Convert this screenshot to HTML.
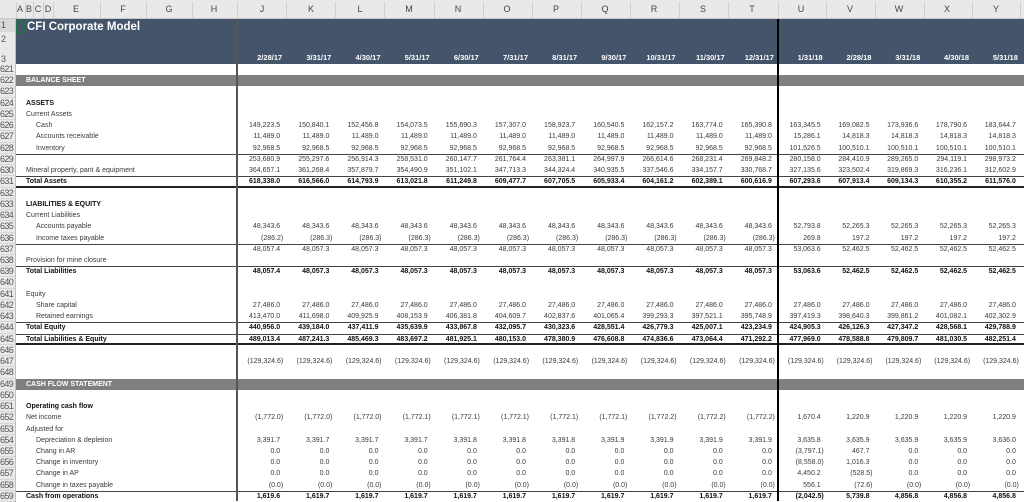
<!DOCTYPE html>
<html><head><meta charset="utf-8"><style>
*{margin:0;padding:0;box-sizing:border-box}
body{width:1024px;height:501px;overflow:hidden;background:#fff;font-family:"Liberation Sans",Arial,sans-serif;position:relative}
.hdr{position:absolute;left:0;top:0;width:1024px;height:19px;background:#e9e9e9;border-bottom:1px solid #c8c8c8}
.hdr span{position:absolute;top:4px;font-size:9px;color:#444;transform:translateX(-50%)}
.hdr i{position:absolute;top:2px;width:1px;height:16px;background:#d0d0d0}
.rn{position:absolute;left:0;width:16px;background:#e9e9e9;border-right:1px solid #c0c0c0;font-size:9px;color:#555;text-align:left;padding-left:1px}
.band{position:absolute;left:16px;top:19px;width:1008px;height:45px;background:#44546a}
.title{position:absolute;left:27px;top:21px;color:#fff;font-weight:bold;font-size:11.5px}
.dates{position:absolute;top:53px;left:237px;display:flex;color:#fff;font-weight:bold;font-size:7.5px}
.dates div{text-align:right;padding-right:4px}
#g{position:absolute;left:0;top:64px;width:1024px}
.r{display:flex;height:11.24px;line-height:11.24px;font-size:7px;color:#3a3a3a;white-space:nowrap;overflow:hidden}
.r .n{width:16px;flex:none;background:#e9e9e9;border-right:1px solid #c0c0c0;font-size:9px;letter-spacing:-0.6px;font-weight:normal;color:#555;padding-left:0;box-shadow:inset 0 -1px #d6d6d6;line-height:11.5px}
.r .w{display:flex;flex:1}
.r .l{width:221px;flex:none;padding-left:10px;overflow:hidden}
.r .l.i{padding-left:20px}
.r .c{width:49.18px;flex:none;text-align:right;padding-right:6px}
.r .c.u{width:48.8px}
.r .c.p{padding-right:3px}
.b{font-weight:bold;color:#111}
.t .w{box-shadow:inset 0 1px #444}
.d .w{box-shadow:inset 0 1px #444,inset 0 -2px #222}
.s .w{background:#7f7f7f;color:#fff;font-weight:bold}
.vl{position:absolute;top:19px;height:482px;width:2px}
.sel{position:absolute;left:16px;top:20px;width:9px;height:13px;border:1.5px solid #217346}
</style></head><body>
<div class="hdr">
<span style="left:20px">A</span><span style="left:29px">B</span><span style="left:38px">C</span><span style="left:48px">D</span><span style="left:76px">E</span><span style="left:123px">F</span><span style="left:169px">G</span><span style="left:214px">H</span>
<span style="left:262px">J</span><span style="left:311px">K</span><span style="left:360px">L</span><span style="left:409px">M</span><span style="left:458px">N</span><span style="left:507px">O</span><span style="left:556px">P</span><span style="left:605px">Q</span><span style="left:654px">R</span><span style="left:703px">S</span><span style="left:752px">T</span><span style="left:801px">U</span><span style="left:850px">V</span><span style="left:899px">W</span><span style="left:947px">X</span><span style="left:996px">Y</span>
<i style="left:16px"></i><i style="left:25px"></i><i style="left:33px"></i><i style="left:43px"></i><i style="left:53px"></i><i style="left:100px"></i><i style="left:146px"></i><i style="left:192px"></i><i style="left:237px"></i><i style="left:286px"></i><i style="left:335px"></i><i style="left:384px"></i><i style="left:434px"></i><i style="left:483px"></i><i style="left:532px"></i><i style="left:581px"></i><i style="left:630px"></i><i style="left:679px"></i><i style="left:728px"></i><i style="left:778px"></i><i style="left:826px"></i><i style="left:875px"></i><i style="left:924px"></i><i style="left:972px"></i><i style="left:1020px"></i>
</div>
<div class="rn" style="top:19px;height:13px;line-height:13px;background:#d8d8d8">1</div>
<div class="rn" style="top:32px;height:13px;line-height:15px">2</div>
<div class="rn" style="top:45px;height:19px;line-height:28px">3</div>
<div class="band"></div>
<div class="sel"></div>
<div class="title">CFI Corporate Model</div>
<div class="dates">
<div style="width:49.18px">2/28/17</div><div style="width:49.18px">3/31/17</div><div style="width:49.18px">4/30/17</div><div style="width:49.18px">5/31/17</div><div style="width:49.18px">6/30/17</div><div style="width:49.18px">7/31/17</div><div style="width:49.18px">8/31/17</div><div style="width:49.18px">9/30/17</div><div style="width:49.18px">10/31/17</div><div style="width:49.18px">11/30/17</div><div style="width:49.18px">12/31/17</div><div style="width:48.8px">1/31/18</div><div style="width:48.8px">2/28/18</div><div style="width:48.8px">3/31/18</div><div style="width:48.8px">4/30/18</div><div style="width:48.8px">5/31/18</div>
</div>
<div id="g">
<div class="r"><div class="n">621</div><div class="w"></div></div>
<div class="r s"><div class="n">622</div><div class="w"><div class="l">BALANCE SHEET</div></div></div>
<div class="r"><div class="n">623</div><div class="w"></div></div>
<div class="r b"><div class="n">624</div><div class="w"><div class="l">ASSETS</div></div></div>
<div class="r"><div class="n">625</div><div class="w"><div class="l">Current Assets</div></div></div>
<div class="r"><div class="n">626</div><div class="w"><div class="l i">Cash</div><div class="c">149,223.5</div><div class="c">150,840.1</div><div class="c">152,456.8</div><div class="c">154,073.5</div><div class="c">155,690.3</div><div class="c">157,307.0</div><div class="c">158,923.7</div><div class="c">160,540.5</div><div class="c">162,157.2</div><div class="c">163,774.0</div><div class="c">165,390.8</div><div class="c u">163,345.5</div><div class="c u">169,082.5</div><div class="c u">173,936.6</div><div class="c u">178,790.6</div><div class="c u">183,644.7</div></div></div>
<div class="r"><div class="n">627</div><div class="w"><div class="l i">Accounts receivable</div><div class="c">11,489.0</div><div class="c">11,489.0</div><div class="c">11,489.0</div><div class="c">11,489.0</div><div class="c">11,489.0</div><div class="c">11,489.0</div><div class="c">11,489.0</div><div class="c">11,489.0</div><div class="c">11,489.0</div><div class="c">11,489.0</div><div class="c">11,489.0</div><div class="c u">15,286.1</div><div class="c u">14,818.3</div><div class="c u">14,818.3</div><div class="c u">14,818.3</div><div class="c u">14,818.3</div></div></div>
<div class="r"><div class="n">628</div><div class="w"><div class="l i">Inventory</div><div class="c">92,968.5</div><div class="c">92,968.5</div><div class="c">92,968.5</div><div class="c">92,968.5</div><div class="c">92,968.5</div><div class="c">92,968.5</div><div class="c">92,968.5</div><div class="c">92,968.5</div><div class="c">92,968.5</div><div class="c">92,968.5</div><div class="c">92,968.5</div><div class="c u">101,526.5</div><div class="c u">100,510.1</div><div class="c u">100,510.1</div><div class="c u">100,510.1</div><div class="c u">100,510.1</div></div></div>
<div class="r t"><div class="n">629</div><div class="w"><div class="l"></div><div class="c">253,680.9</div><div class="c">255,297.6</div><div class="c">256,914.3</div><div class="c">258,531.0</div><div class="c">260,147.7</div><div class="c">261,764.4</div><div class="c">263,381.1</div><div class="c">264,997.9</div><div class="c">266,614.6</div><div class="c">268,231.4</div><div class="c">269,848.2</div><div class="c u">280,158.0</div><div class="c u">284,410.9</div><div class="c u">289,265.0</div><div class="c u">294,119.1</div><div class="c u">298,973.2</div></div></div>
<div class="r"><div class="n">630</div><div class="w"><div class="l">Mineral property, pant &amp; equipment</div><div class="c">364,657.1</div><div class="c">361,268.4</div><div class="c">357,879.7</div><div class="c">354,490.9</div><div class="c">351,102.1</div><div class="c">347,713.3</div><div class="c">344,324.4</div><div class="c">340,935.5</div><div class="c">337,546.6</div><div class="c">334,157.7</div><div class="c">330,768.7</div><div class="c u">327,135.6</div><div class="c u">323,502.4</div><div class="c u">319,869.3</div><div class="c u">316,236.1</div><div class="c u">312,602.9</div></div></div>
<div class="r d b"><div class="n">631</div><div class="w"><div class="l">Total Assets</div><div class="c">618,338.0</div><div class="c">616,566.0</div><div class="c">614,793.9</div><div class="c">613,021.8</div><div class="c">611,249.8</div><div class="c">609,477.7</div><div class="c">607,705.5</div><div class="c">605,933.4</div><div class="c">604,161.2</div><div class="c">602,389.1</div><div class="c">600,616.9</div><div class="c u">607,293.6</div><div class="c u">607,913.4</div><div class="c u">609,134.3</div><div class="c u">610,355.2</div><div class="c u">611,576.0</div></div></div>
<div class="r"><div class="n">632</div><div class="w"></div></div>
<div class="r b"><div class="n">633</div><div class="w"><div class="l">LIABILITIES &amp; EQUITY</div></div></div>
<div class="r"><div class="n">634</div><div class="w"><div class="l">Current Liabilities</div></div></div>
<div class="r"><div class="n">635</div><div class="w"><div class="l i">Accounts payable</div><div class="c">48,343.6</div><div class="c">48,343.6</div><div class="c">48,343.6</div><div class="c">48,343.6</div><div class="c">48,343.6</div><div class="c">48,343.6</div><div class="c">48,343.6</div><div class="c">48,343.6</div><div class="c">48,343.6</div><div class="c">48,343.6</div><div class="c">48,343.6</div><div class="c u">52,793.8</div><div class="c u">52,265.3</div><div class="c u">52,265.3</div><div class="c u">52,265.3</div><div class="c u">52,265.3</div></div></div>
<div class="r"><div class="n">636</div><div class="w"><div class="l i">Income taxes payable</div><div class="c p">(286.2)</div><div class="c p">(286.3)</div><div class="c p">(286.3)</div><div class="c p">(286.3)</div><div class="c p">(286.3)</div><div class="c p">(286.3)</div><div class="c p">(286.3)</div><div class="c p">(286.3)</div><div class="c p">(286.3)</div><div class="c p">(286.3)</div><div class="c p">(286.3)</div><div class="c u">269.8</div><div class="c u">197.2</div><div class="c u">197.2</div><div class="c u">197.2</div><div class="c u">197.2</div></div></div>
<div class="r t"><div class="n">637</div><div class="w"><div class="l"></div><div class="c">48,057.4</div><div class="c">48,057.3</div><div class="c">48,057.3</div><div class="c">48,057.3</div><div class="c">48,057.3</div><div class="c">48,057.3</div><div class="c">48,057.3</div><div class="c">48,057.3</div><div class="c">48,057.3</div><div class="c">48,057.3</div><div class="c">48,057.3</div><div class="c u">53,063.6</div><div class="c u">52,462.5</div><div class="c u">52,462.5</div><div class="c u">52,462.5</div><div class="c u">52,462.5</div></div></div>
<div class="r"><div class="n">638</div><div class="w"><div class="l">Provision for mine closure</div></div></div>
<div class="r t b"><div class="n">639</div><div class="w"><div class="l">Total Liabilities</div><div class="c">48,057.4</div><div class="c">48,057.3</div><div class="c">48,057.3</div><div class="c">48,057.3</div><div class="c">48,057.3</div><div class="c">48,057.3</div><div class="c">48,057.3</div><div class="c">48,057.3</div><div class="c">48,057.3</div><div class="c">48,057.3</div><div class="c">48,057.3</div><div class="c u">53,063.6</div><div class="c u">52,462.5</div><div class="c u">52,462.5</div><div class="c u">52,462.5</div><div class="c u">52,462.5</div></div></div>
<div class="r"><div class="n">640</div><div class="w"></div></div>
<div class="r"><div class="n">641</div><div class="w"><div class="l">Equity</div></div></div>
<div class="r"><div class="n">642</div><div class="w"><div class="l i">Share capital</div><div class="c">27,486.0</div><div class="c">27,486.0</div><div class="c">27,486.0</div><div class="c">27,486.0</div><div class="c">27,486.0</div><div class="c">27,486.0</div><div class="c">27,486.0</div><div class="c">27,486.0</div><div class="c">27,486.0</div><div class="c">27,486.0</div><div class="c">27,486.0</div><div class="c u">27,486.0</div><div class="c u">27,486.0</div><div class="c u">27,486.0</div><div class="c u">27,486.0</div><div class="c u">27,486.0</div></div></div>
<div class="r"><div class="n">643</div><div class="w"><div class="l i">Retained earnings</div><div class="c">413,470.0</div><div class="c">411,698.0</div><div class="c">409,925.9</div><div class="c">408,153.9</div><div class="c">406,381.8</div><div class="c">404,609.7</div><div class="c">402,837.6</div><div class="c">401,065.4</div><div class="c">399,293.3</div><div class="c">397,521.1</div><div class="c">395,748.9</div><div class="c u">397,419.3</div><div class="c u">398,640.3</div><div class="c u">399,861.2</div><div class="c u">401,082.1</div><div class="c u">402,302.9</div></div></div>
<div class="r t b"><div class="n">644</div><div class="w"><div class="l">Total Equity</div><div class="c">440,956.0</div><div class="c">439,184.0</div><div class="c">437,411.9</div><div class="c">435,639.9</div><div class="c">433,867.8</div><div class="c">432,095.7</div><div class="c">430,323.6</div><div class="c">428,551.4</div><div class="c">426,779.3</div><div class="c">425,007.1</div><div class="c">423,234.9</div><div class="c u">424,905.3</div><div class="c u">426,126.3</div><div class="c u">427,347.2</div><div class="c u">428,568.1</div><div class="c u">429,788.9</div></div></div>
<div class="r d b"><div class="n">645</div><div class="w"><div class="l">Total Liabilities &amp; Equity</div><div class="c">489,013.4</div><div class="c">487,241.3</div><div class="c">485,469.3</div><div class="c">483,697.2</div><div class="c">481,925.1</div><div class="c">480,153.0</div><div class="c">478,380.9</div><div class="c">476,608.8</div><div class="c">474,836.6</div><div class="c">473,064.4</div><div class="c">471,292.2</div><div class="c u">477,969.0</div><div class="c u">478,588.8</div><div class="c u">479,809.7</div><div class="c u">481,030.5</div><div class="c u">482,251.4</div></div></div>
<div class="r"><div class="n">646</div><div class="w"></div></div>
<div class="r"><div class="n">647</div><div class="w"><div class="l"></div><div class="c p">(129,324.6)</div><div class="c p">(129,324.6)</div><div class="c p">(129,324.6)</div><div class="c p">(129,324.6)</div><div class="c p">(129,324.6)</div><div class="c p">(129,324.6)</div><div class="c p">(129,324.6)</div><div class="c p">(129,324.6)</div><div class="c p">(129,324.6)</div><div class="c p">(129,324.6)</div><div class="c p">(129,324.6)</div><div class="c u p">(129,324.6)</div><div class="c u p">(129,324.6)</div><div class="c u p">(129,324.6)</div><div class="c u p">(129,324.6)</div><div class="c u p">(129,324.6)</div></div></div>
<div class="r"><div class="n">648</div><div class="w"></div></div>
<div class="r s"><div class="n">649</div><div class="w"><div class="l">CASH FLOW STATEMENT</div></div></div>
<div class="r"><div class="n">650</div><div class="w"></div></div>
<div class="r b"><div class="n">651</div><div class="w"><div class="l">Operating cash flow</div></div></div>
<div class="r"><div class="n">652</div><div class="w"><div class="l">Net income</div><div class="c p">(1,772.0)</div><div class="c p">(1,772.0)</div><div class="c p">(1,772.0)</div><div class="c p">(1,772.1)</div><div class="c p">(1,772.1)</div><div class="c p">(1,772.1)</div><div class="c p">(1,772.1)</div><div class="c p">(1,772.1)</div><div class="c p">(1,772.2)</div><div class="c p">(1,772.2)</div><div class="c p">(1,772.2)</div><div class="c u">1,670.4</div><div class="c u">1,220.9</div><div class="c u">1,220.9</div><div class="c u">1,220.9</div><div class="c u">1,220.9</div></div></div>
<div class="r"><div class="n">653</div><div class="w"><div class="l">Adjusted for</div></div></div>
<div class="r"><div class="n">654</div><div class="w"><div class="l i">Depreciation &amp; depletion</div><div class="c">3,391.7</div><div class="c">3,391.7</div><div class="c">3,391.7</div><div class="c">3,391.7</div><div class="c">3,391.8</div><div class="c">3,391.8</div><div class="c">3,391.8</div><div class="c">3,391.9</div><div class="c">3,391.9</div><div class="c">3,391.9</div><div class="c">3,391.9</div><div class="c u">3,635.8</div><div class="c u">3,635.9</div><div class="c u">3,635.9</div><div class="c u">3,635.9</div><div class="c u">3,636.0</div></div></div>
<div class="r"><div class="n">655</div><div class="w"><div class="l i">Chang in AR</div><div class="c">0.0</div><div class="c">0.0</div><div class="c">0.0</div><div class="c">0.0</div><div class="c">0.0</div><div class="c">0.0</div><div class="c">0.0</div><div class="c">0.0</div><div class="c">0.0</div><div class="c">0.0</div><div class="c">0.0</div><div class="c u p">(3,797.1)</div><div class="c u">467.7</div><div class="c u">0.0</div><div class="c u">0.0</div><div class="c u">0.0</div></div></div>
<div class="r"><div class="n">656</div><div class="w"><div class="l i">Change in inventory</div><div class="c">0.0</div><div class="c">0.0</div><div class="c">0.0</div><div class="c">0.0</div><div class="c">0.0</div><div class="c">0.0</div><div class="c">0.0</div><div class="c">0.0</div><div class="c">0.0</div><div class="c">0.0</div><div class="c">0.0</div><div class="c u p">(8,558.0)</div><div class="c u">1,016.3</div><div class="c u">0.0</div><div class="c u">0.0</div><div class="c u">0.0</div></div></div>
<div class="r"><div class="n">657</div><div class="w"><div class="l i">Change in AP</div><div class="c">0.0</div><div class="c">0.0</div><div class="c">0.0</div><div class="c">0.0</div><div class="c">0.0</div><div class="c">0.0</div><div class="c">0.0</div><div class="c">0.0</div><div class="c">0.0</div><div class="c">0.0</div><div class="c">0.0</div><div class="c u">4,450.2</div><div class="c u p">(528.5)</div><div class="c u">0.0</div><div class="c u">0.0</div><div class="c u">0.0</div></div></div>
<div class="r"><div class="n">658</div><div class="w"><div class="l i">Change in taxes payable</div><div class="c p">(0.0)</div><div class="c p">(0.0)</div><div class="c p">(0.0)</div><div class="c p">(0.0)</div><div class="c p">(0.0)</div><div class="c p">(0.0)</div><div class="c p">(0.0)</div><div class="c p">(0.0)</div><div class="c p">(0.0)</div><div class="c p">(0.0)</div><div class="c p">(0.0)</div><div class="c u">556.1</div><div class="c u p">(72.6)</div><div class="c u p">(0.0)</div><div class="c u p">(0.0)</div><div class="c u p">(0.0)</div></div></div>
<div class="r t b"><div class="n">659</div><div class="w"><div class="l">Cash from operations</div><div class="c">1,619.6</div><div class="c">1,619.7</div><div class="c">1,619.7</div><div class="c">1,619.7</div><div class="c">1,619.7</div><div class="c">1,619.7</div><div class="c">1,619.7</div><div class="c">1,619.7</div><div class="c">1,619.7</div><div class="c">1,619.7</div><div class="c">1,619.7</div><div class="c u p">(2,042.5)</div><div class="c u">5,739.8</div><div class="c u">4,856.8</div><div class="c u">4,856.8</div><div class="c u">4,856.8</div></div></div>
</div>
<div class="vl" style="left:236px;background:#555"></div>
<div class="vl" style="left:777px;background:#000"></div>
</body></html>
